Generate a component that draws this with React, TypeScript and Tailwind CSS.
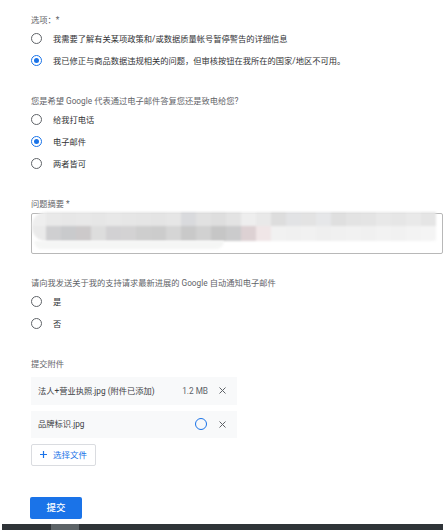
import React from 'react';

const font = { fontFamily: 'Roboto, "Noto Sans CJK SC", sans-serif' };

const topBlocks = [
  'bg-[#eeeeee]', 'bg-[#e9e9e9]', 'bg-[#e7e7e7]', 'bg-[#e8e8e8]', 'bg-[#e6e6e6]', 'bg-[#e8e8e8]',
  'bg-[#e6e6e6]', 'bg-[#e5e5e5]', 'bg-[#e4e4e4]', 'bg-[#e6e6e6]', 'bg-[#d9dadd]', 'bg-[#e1e1e1]',
  'bg-[#dedede]', 'bg-[#e3e3e3]', 'bg-[#eeeeee]', 'bg-[#e9e9e9]', 'bg-[#dddddd]', 'bg-[#e2e3e5]',
  'bg-[#e3e3e3]', 'bg-[#e6e7e9]', 'bg-[#dfdfdf]', 'bg-[#e3e3e3]', 'bg-[#e4e4e4]', 'bg-[#e8e8e8]',
  'bg-[#e6e6e6]', 'bg-[#e9e9e9]', 'bg-[#e5e5e5]',
];

const bottomBlocks = [
  'bg-[#eaeaea]', 'bg-[#cfcfd1]', 'bg-[#c9cacc]', 'bg-[#ccc9ca]', 'bg-[#dddddd]', 'bg-[#d2d1d3]',
  'bg-[#d3d2d3]', 'bg-[#cecece]', 'bg-[#cccccc]', 'bg-[#d5d5d5]', 'bg-[#c9c9c9]', 'bg-[#d1d1d1]',
  'bg-[#c6c6c6]', 'bg-[#cbcbcc]', 'bg-[#ddd1d3]', 'bg-[#f0e6e7]', 'bg-[#f1f1f1]', 'bg-[#f0f0f0]',
  'bg-[#f1f1f1]', 'bg-[#efefef]', 'bg-[#f0f0f0]', 'bg-[#f1f1f1]', 'bg-[#f0f0f0]', 'bg-[#f2f2f2]',
  'bg-[#f1f1f1]', 'bg-[#f3f3f3]', 'bg-[#f4f4f4]',
];

const Radio: React.FC<{ label: string; checked?: boolean }> = ({ label, checked = false }) => (
  <div className="flex h-[22px] items-center">
    {checked ? (
      <span className="flex h-[11px] w-[11px] items-center justify-center rounded-full border-[1.5px] border-[#1a73e8]">
        <span className="h-[5px] w-[5px] rounded-full bg-[#1a73e8]" />
      </span>
    ) : (
      <span className="h-[11px] w-[11px] rounded-full border-[1.5px] border-[#5f6368]" />
    )}
    <span className="ml-[11px] text-[8.25px] leading-[12px] text-[#303134]">{label}</span>
  </div>
);

const Label: React.FC<{ text: string; className?: string }> = ({ text, className = '' }) => (
  <div className={`h-[12px] text-[8.25px] leading-[12px] text-[#5f6368] ${className}`}>{text}</div>
);

const CloseIcon = () => (
  <svg width="7" height="7" viewBox="0 0 7 7" className="shrink-0">
    <path d="M0.5 0.5L6.5 6.5M6.5 0.5L0.5 6.5" stroke="#5f6368" strokeWidth="1" />
  </svg>
);

export default function App() {
  return (
    <div className="h-[530px] w-[446px] overflow-hidden bg-white" style={font}>
      <div className="pl-[31px] pt-[14px]">
        <Label text="选项：*" />
        <div className="mt-[1.5px]">
          <Radio label="我需要了解有关某项政策和/或数据质量帐号暂停警告的详细信息" />
          <Radio label="我已修正与商品数据违规相关的问题，但审核按钮在我所在的国家/地区不可用。" checked />
        </div>

        <Label text="您是希望 Google 代表通过电子邮件答复您还是致电给您?" className="mt-[23.5px]" />
        <div className="mt-[1.5px]">
          <Radio label="给我打电话" />
          <Radio label="电子邮件" checked />
          <Radio label="两者皆可" />
        </div>

        <Label text="问题摘要 *" className="mt-[23.5px]" />
        <div className="mt-[3px] h-[41px] w-[412px] rounded-[2px] border border-[#b8b8b8]">
          <div className="-mt-[2px] overflow-hidden rounded-l-[14px] rounded-br-[10px] blur-[0.8px]">
            <div className="flex h-[14px]">
              {topBlocks.map((c, i) => (
                <div key={i} className={`h-full ${i === 0 ? 'w-[14px]' : 'w-[15px]'} ${c}`} />
              ))}
            </div>
            <div className="flex h-[15px]">
              {bottomBlocks.map((c, i) => (
                <div key={i} className={`h-full ${i === 0 ? 'w-[14px]' : 'w-[15px]'} ${c}`} />
              ))}
            </div>
          </div>
          <div className="ml-[2px] h-[8px] w-[190px] rounded-b-full bg-[#f5f6f5] blur-[1px]" />
        </div>

        <Label text="请向我发送关于我的支持请求最新进展的 Google 自动通知电子邮件" className="mt-[23px]" />
        <div className="mt-[1.7px]">
          <Radio label="是" />
          <Radio label="否" />
        </div>

        <Label text="提交附件" className="mt-[23.3px]" />
        <div className="mt-[7px] flex h-[28px] w-[206px] items-center bg-[#f8f9fa] pl-[7px] pr-[11px] text-[8.25px] text-[#3c4043]">
          <span className="flex-1">法人+营业执照.jpg (附件已添加)</span>
          <span className="text-[#5f6368]">1.2 MB</span>
          <span className="ml-[11px]">
            <CloseIcon />
          </span>
        </div>
        <div className="mt-[6px] flex h-[27px] w-[206px] items-center bg-[#f8f9fa] pl-[7px] pr-[11px] text-[8.25px] text-[#3c4043]">
          <span className="flex-1">品牌标识.jpg</span>
          <span className="h-[12px] w-[12px] rounded-full border-[1.5px] border-[#1a73e8]" />
          <span className="ml-[12px]">
            <CloseIcon />
          </span>
        </div>
        <button className="mt-[6px] flex h-[22px] w-[65px] items-center rounded-[2px] border border-[#dadce0] bg-white pl-[8px] text-[8.5px] text-[#1a73e8]">
          <svg width="7" height="7" viewBox="0 0 7 7">
            <path d="M3.5 0V7M0 3.5H7" stroke="#1a73e8" strokeWidth="1.2" />
          </svg>
          <span className="ml-[6px]">选择文件</span>
        </button>

        <button className="-ml-[1px] mt-[31px] flex h-[22px] w-[52px] items-center justify-center rounded-[2px] bg-[#1a73e8] text-[9.5px] font-medium text-white">
          提交
        </button>
      </div>
      <div className="ml-[2px] mt-[5px] flex h-[6px] w-[441px] bg-[#2f3438]">
        <div className="ml-[49px] h-full w-[28px] bg-[#5c6367]" />
      </div>
    </div>
  );
}
